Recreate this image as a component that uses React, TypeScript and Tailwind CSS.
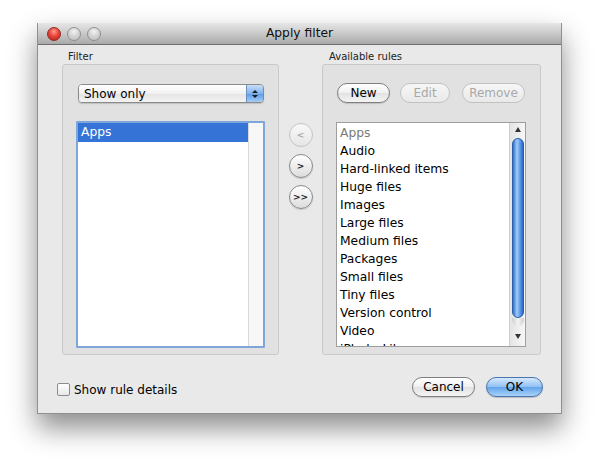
import React from "react";

const font = { fontFamily: '"DejaVu Sans", "Liberation Sans", sans-serif' };

function PushButton({ label, disabled, w }: { label: string; disabled?: boolean; w: string }) {
  return (
    <div
      className={`${w} h-[20px] rounded-full border flex items-center justify-center text-[12px] leading-none ${
        disabled
          ? "border-[#c2c2c2] text-[#a8a8a8] bg-[linear-gradient(to_bottom,#f6f6f6,#e9e9e9)]"
          : "border-[#7f7f7f] text-black bg-[linear-gradient(to_bottom,#ffffff,#f0f0f0_50%,#e2e2e2_51%,#f4f4f4)] shadow-[0_1px_1px_rgba(0,0,0,0.15)]"
      }`}
    >
      {label}
    </div>
  );
}

function RoundBtn({ label, disabled }: { label: string; disabled?: boolean }) {
  return (
    <div
      className={`w-[24px] h-[24px] rounded-full border flex items-center justify-center text-[9px] leading-none font-bold ${
        disabled
          ? "border-[#c4c4c4] text-[#a8a8a8] bg-[linear-gradient(to_bottom,#f8f8f8,#e6e6e6)]"
          : "border-[#8a8a8a] text-[#222] bg-[linear-gradient(to_bottom,#ffffff,#ececec_55%,#dcdcdc)] shadow-[0_1px_1px_rgba(0,0,0,0.15)]"
      }`}
    >
      {label}
    </div>
  );
}

const rules = [
  "Apps",
  "Audio",
  "Hard-linked items",
  "Huge files",
  "Images",
  "Large files",
  "Medium files",
  "Packages",
  "Small files",
  "Tiny files",
  "Version control",
  "Video",
  "iPhoto Library",
];

export default function App() {
  return (
    <div className="w-[600px] h-[467px] bg-white pt-[23px] pl-[37px] overflow-hidden" style={font}>
      <div className="w-[525px] h-[391px] flex flex-col bg-[#e9e9e9] border border-[#8f8f8f] border-t-0 shadow-[0_14px_26px_rgba(0,0,0,0.45)]">
        {/* Title bar */}
        <div className="relative h-[22px] shrink-0 flex items-center justify-center bg-[linear-gradient(to_bottom,#e6e6e6,#c9c9c9_50%,#a9a9a9)] border-b border-[#6e6e6e] rounded-t-[4px]">
          <div className="absolute left-[9px] top-[4px] flex gap-[6px]">
            <div className="w-[14px] h-[14px] rounded-full border border-[#8c2a22] bg-[radial-gradient(circle_at_50%_30%,#ff9c8f,#e9453a_45%,#b3201a)]" />
            <div className="w-[14px] h-[14px] rounded-full border border-[#8f8f8f] bg-[radial-gradient(circle_at_50%_30%,#f2f2f2,#d2d2d2_50%,#bcbcbc)]" />
            <div className="w-[14px] h-[14px] rounded-full border border-[#8f8f8f] bg-[radial-gradient(circle_at_50%_30%,#f2f2f2,#d2d2d2_50%,#bcbcbc)]" />
          </div>
          <span className="text-[12.3px] text-[#111] leading-none">Apply filter</span>
        </div>

        {/* Content */}
        <div className="flex pl-[24px] pt-[5px]">
          {/* Filter group */}
          <div className="w-[217px]">
            <div className="h-[14px] pl-[6px] text-[10px] leading-[14px] text-[#222]">Filter</div>
            <div className="h-[291px] border border-[#c9c9c9] rounded-[3px] bg-[#e1e1e1] flex flex-col">
              <div className="mt-[19px] ml-[15px] w-[186px] h-[19px] flex rounded-[4px] border border-[#8a8a8a] overflow-hidden shadow-[0_1px_1px_rgba(0,0,0,0.15)]">
                <div className="flex-1 flex items-center pl-[5px] text-[12px] leading-none bg-[linear-gradient(to_bottom,#ffffff,#f1f1f1_50%,#e4e4e4_51%,#f3f3f3)]">
                  Show only
                </div>
                <div className="w-[17px] border-l border-[#6b8fbf] flex flex-col items-center justify-center gap-[2px] bg-[linear-gradient(to_bottom,#c9dff7,#7fb2ee_50%,#5a9be6_51%,#a6cdf6)]">
                  <div className="w-0 h-0 border-l-[3px] border-r-[3px] border-b-[3px] border-l-transparent border-r-transparent border-b-[#1a1a1a]" />
                  <div className="w-0 h-0 border-l-[3px] border-r-[3px] border-t-[3px] border-l-transparent border-r-transparent border-t-[#1a1a1a]" />
                </div>
              </div>
              <div className="mt-[18px] ml-[13px] w-[189px] h-[227px] border-2 border-[#7ea6db] bg-white flex rounded-[1px]">
                <div className="flex-1">
                  <div className="h-[19px] bg-[#3574d6] text-white text-[12.3px] leading-[19px] pl-[3px]">Apps</div>
                </div>
                <div className="w-[15px] border-l border-[#d9d9d9] bg-[#f7f7f7]" />
              </div>
            </div>
          </div>

          {/* Middle buttons */}
          <div className="w-[43px] pt-[73px] flex flex-col items-center gap-[7px]">
            <RoundBtn label="<" disabled />
            <RoundBtn label=">" />
            <RoundBtn label=">>" />
          </div>

          {/* Available rules group */}
          <div className="w-[219px]">
            <div className="h-[14px] pl-[7px] text-[10px] leading-[14px] text-[#222]">Available rules</div>
            <div className="h-[291px] border border-[#c9c9c9] rounded-[3px] bg-[#e1e1e1] flex flex-col">
              <div className="mt-[18px] ml-[14px] flex">
                <PushButton label="New" w="w-[53px]" />
                <div className="ml-[10px]">
                  <PushButton label="Edit" w="w-[50px]" disabled />
                </div>
                <div className="ml-[12px]">
                  <PushButton label="Remove" w="w-[63px]" disabled />
                </div>
              </div>
              <div className="mt-[19px] ml-[13px] w-[190px] h-[225px] border border-[#9d9d9d] bg-white flex overflow-hidden">
                <div className="flex-1 overflow-hidden pt-[1px]">
                  {rules.map((r, i) => (
                    <div
                      key={r}
                      className={`h-[18px] leading-[18px] pl-[3px] text-[12.3px] whitespace-nowrap ${
                        i === 0 ? "text-[#7a7a7a]" : "text-black"
                      }`}
                    >
                      {r}
                    </div>
                  ))}
                </div>
                <div className="w-[16px] border-l border-[#cfcfcf] bg-[linear-gradient(to_right,#e4e4e4,#f7f7f7)] flex flex-col items-center">
                  <div className="h-[13px] flex items-center justify-center">
                    <div className="w-0 h-0 border-l-[3px] border-r-[3px] border-b-[5px] border-l-transparent border-r-transparent border-b-[#333]" />
                  </div>
                  <div className="mt-[2px] w-[12px] h-[180px] rounded-full border border-[#2b5da8] bg-[linear-gradient(to_right,#2e6fd4,#a3ccf7_40%,#5b9ae9_70%,#2b65c9)]" />
                  <div className="w-[12px] h-[8px] rounded-b-full bg-[linear-gradient(to_right,#cfcfcf,#f4f4f4,#cfcfcf)]" />
                  <div className="flex-1 flex items-center justify-center">
                    <div className="w-0 h-0 border-l-[3px] border-r-[3px] border-t-[5px] border-l-transparent border-r-transparent border-t-[#333]" />
                  </div>
                </div>
              </div>
            </div>
          </div>
        </div>

        {/* Bottom row */}
        <div className="mt-[22px] flex items-start pl-[19px] pr-[18px]">
          <div className="mt-[6px] flex items-center">
            <div className="w-[13px] h-[13px] rounded-[2px] border border-[#8c8c8c] bg-[linear-gradient(to_bottom,#ffffff,#e8e8e8)]" />
            <span className="ml-[4px] text-[12px] leading-none text-black">Show rule details</span>
          </div>
          <div className="ml-auto flex">
            <PushButton label="Cancel" w="w-[63px]" />
            <div className="ml-[11px] w-[57px] h-[20px] rounded-full border border-[#4a74ad] flex items-center justify-center text-[12px] leading-none text-black bg-[linear-gradient(to_bottom,#d6e9fc,#8ec0f3_50%,#62a3ec_51%,#a9d2f8)] shadow-[0_1px_1px_rgba(0,0,0,0.2)]">
              OK
            </div>
          </div>
        </div>
      </div>
    </div>
  );
}
